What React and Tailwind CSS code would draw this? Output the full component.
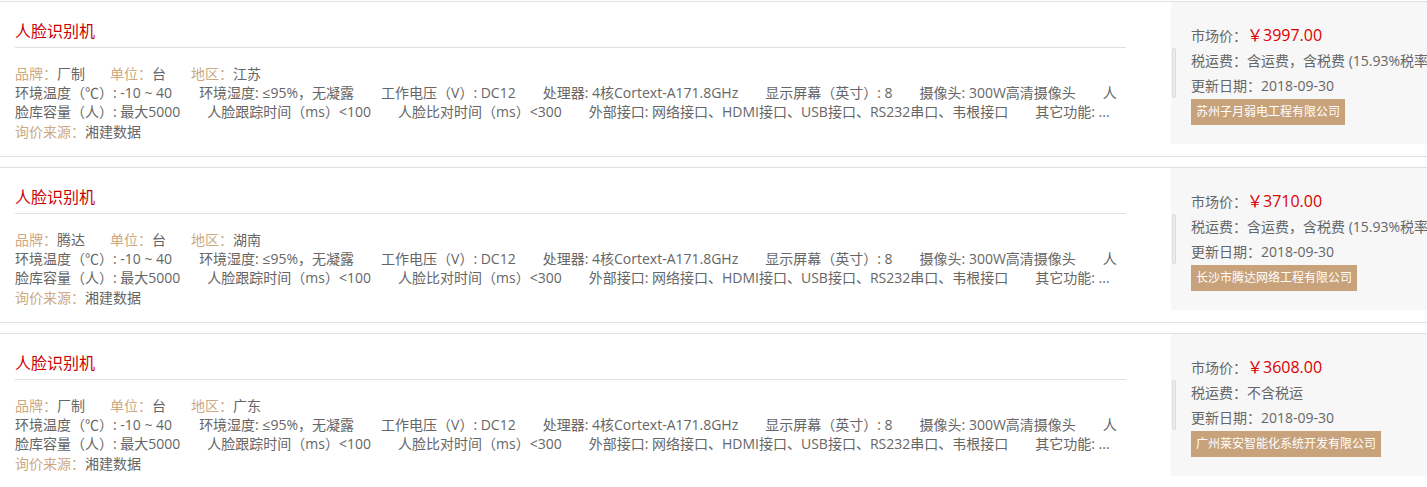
import React from "react";

const specLines = [
    [
        "环境温度（℃）: -10 ~ 40",
        "环境湿度: ≤95%，无凝露",
        "工作电压（V）: DC12",
        "处理器: 4核Cortext-A171.8GHz",
        "显示屏幕（英寸）: 8",
        "摄像头: 300W高清摄像头",
        "人",
    ],
    [
        "脸库容量（人）: 最大5000",
        "人脸跟踪时间（ms）<100",
        "人脸比对时间（ms）<300",
        "外部接口: 网络接口、HDMI接口、USB接口、RS232串口、韦根接口",
        "其它功能: ...",
    ],
];

const items = [
    {
        brand: "厂制",
        unit: "台",
        region: "江苏",
        price: "3997.00",
        shipping: "含运费，含税费 (15.93%税率)",
        date: "2018-09-30",
        company: "苏州子月弱电工程有限公司",
    },
    {
        brand: "腾达",
        unit: "台",
        region: "湖南",
        price: "3710.00",
        shipping: "含运费，含税费 (15.93%税率)",
        date: "2018-09-30",
        company: "长沙市腾达网络工程有限公司",
    },
    {
        brand: "厂制",
        unit: "台",
        region: "广东",
        price: "3608.00",
        shipping: "不含税运",
        date: "2018-09-30",
        company: "广州莱安智能化系统开发有限公司",
    },
];

const Field = ({ label, value }) => (
    <span>
        <span className="text-[#cda982]">{label}：</span>
        <span className="text-[#666]">{value}</span>
    </span>
);

const PriceCard = ({ item }) => {
    return (
        <div className="flex items-start w-[1480px] h-[156px] border-y border-[#e0e0e0] bg-white">
            {/* left: product info */}
            <div className="w-[1171px] shrink-0 pl-[15px] pr-[45px]">
                <h3 className="pt-[18px] pb-[5px] border-b border-[#e0e0e0] text-[16px] leading-[22px] text-[#cc0000]">
                    人脸识别机
                </h3>
                <div className="mt-[16px] text-[14px] leading-[19px]">
                    <div className="flex gap-[25px]">
                        <Field label="品牌" value={item.brand} />
                        <Field label="单位" value={item.unit} />
                        <Field label="地区" value={item.region} />
                    </div>
                    {specLines.map((line, i) => (
                        <div key={i} className="flex gap-[27px] whitespace-nowrap overflow-hidden text-[#666]">
                            {line.map((s, j) => (
                                <span key={j}>{s}</span>
                            ))}
                        </div>
                    ))}
                    <div className="mt-px">
                        <Field label="询价来源" value="湘建数据" />
                    </div>
                </div>
            </div>

            {/* right: price panel */}
            <div className="relative flex-1 h-[142px] bg-[#f7f7f7] pl-[20px] pt-[21px] text-[14px] leading-[25px] text-[#666] whitespace-nowrap">
                <div className="absolute left-px top-[46px] w-[4px] h-[50px] rounded-full bg-[#ececec] border border-[#dcdcdc]"></div>
                <div>
                    市场价：<span className="text-[16px] text-[#dd0000]">￥{item.price}</span>
                </div>
                <div>税运费：{item.shipping}</div>
                <div>更新日期：{item.date}</div>
                <span className="inline-block px-[5px] leading-[26px] text-[12px] text-white bg-[#c8a27a]">
                    {item.company}
                </span>
            </div>
        </div>
    );
};

const App = () => {
    return (
        <div
            className="w-full overflow-hidden bg-white pt-px flex flex-col gap-[10px]"
            style={{ fontFamily: '"Open Sans", "Noto Sans CJK SC", sans-serif' }}
        >
            {items.map((item, i) => (
                <PriceCard key={i} item={item} />
            ))}
        </div>
    );
};

export default App;
